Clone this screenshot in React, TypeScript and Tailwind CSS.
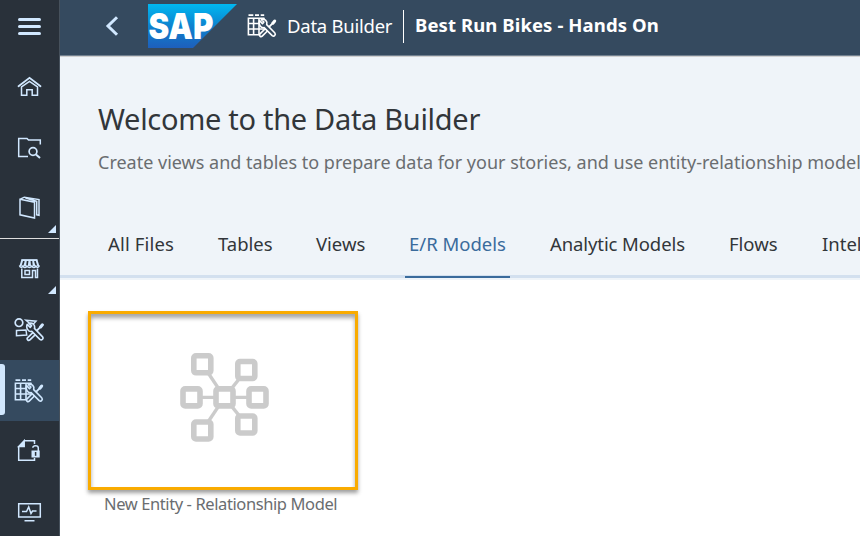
import type { ReactNode } from 'react';

const ICE = '#d1e8ff';

function Tools({ color, bg }: { color: string; bg: string }) {
  return (
    <g strokeLinecap="round" strokeLinejoin="round" fill="none">
      <path d="M16 2.2L9.5 8.8" stroke={color} strokeWidth="1.8" />
      <path d="M14.6 3.8L16.4 1.6" stroke={color} strokeWidth="3" />
      <path d="M8 10.5L2.8 15.6" stroke={color} strokeWidth="4.8" />
      <path d="M8 10.5L2.8 15.6" stroke={bg} strokeWidth="1.5" />
      <path
        d="M1.2 1.2L4.2 4.2L5.6 2.6L3 .2C6.5-1 9.5 2 8.4 5.2L16.4 13.4C18 15.2 15.8 17.8 13.9 16.2L5.8 8.2C2.6 9 -.4 5 1.2 1.2Z"
        stroke={color}
        strokeWidth="1.6"
        fill={bg}
      />
    </g>
  );
}

function GridTools({ color, bg }: { color: string; bg: string }) {
  return (
    <svg className="h-[24px] w-[30px] shrink-0" viewBox="0 0 30 24" fill="none">
      <path d="M1.5 1.2H6.3M8 1.2H12M13.7 1.2H17.2" stroke={color} strokeWidth="1.8" />
      <path d="M1 4.2H17.5M1 9.5H17M1 15H17M1 20.7H14M1.4 3.4V21.4M6.6 4V21M12 4V21M17 4V8" stroke={color} strokeWidth="1.6" />
      <g transform="translate(11.3 5.4)">
        <Tools color={color} bg={bg} />
      </g>
    </svg>
  );
}

function NavItem({ children, tall, active, more }: { children: ReactNode; tall?: boolean; active?: boolean; more?: boolean }) {
  return (
    <button
      className={`relative flex w-full shrink-0 items-center pl-[14px] ${tall ? 'h-[61px]' : 'h-[60px]'} ${active ? 'bg-[#354a5f]' : ''}`}
    >
      {active && <span className="absolute left-0 top-1 h-[51px] w-[5px] rounded-r-[3px] bg-[#d1e8ff]" />}
      {children}
      {more && (
        <svg className="absolute bottom-[5px] right-[3px] h-2 w-2" viewBox="0 0 8 8">
          <path d="M8 0V8H0Z" fill={ICE} />
        </svg>
      )}
    </button>
  );
}

function Glyph({ children }: { children: ReactNode }) {
  return (
    <svg className="h-6 w-[30px]" viewBox="0 0 30 24" fill="none" stroke={ICE} strokeWidth="1.5">
      {children}
    </svg>
  );
}

function Sidebar() {
  return (
    <nav className="flex h-full w-[60px] shrink-0 flex-col overflow-hidden border-r border-[#46515c] bg-[#29313a]">
      <button className="flex h-[57px] shrink-0 flex-col gap-1 pl-[18px] pt-[18px]">
        <span className="h-[3px] w-[23px] rounded-full bg-[#d1e8ff]" />
        <span className="h-[3px] w-[23px] rounded-full bg-[#d1e8ff]" />
        <span className="h-[3px] w-[23px] rounded-full bg-[#d1e8ff]" />
      </button>
      <NavItem>
        <Glyph>
          <path d="M4.5 11.3L15.5 2.8L26.5 11.3" strokeWidth="1.8" strokeLinecap="round" />
          <path d="M7.5 12V20.3H12.8V14.7H18.2V20.3H23.5V12L15.5 6.3Z" />
        </Glyph>
      </NavItem>
      <NavItem tall>
        <Glyph>
          <path d="M14 20.5H4.7V2.5H13L14.5 4H26.3V8.5" />
          <circle cx="19" cy="15.5" r="3.9" strokeWidth="1.7" />
          <path d="M22 18.5L26 22" strokeWidth="2" />
        </Glyph>
      </NavItem>
      <div className="relative border-b border-[#dedede]">
        <NavItem more>
          <Glyph>
            <path d="M6 3.3L20.5 6.2V22L6 18.8ZM6.3 3.2L10.3 1.2L25 3.6V19.3L22.5 18.8M11.5 2L22.7 5.2V19.5" />
          </Glyph>
        </NavItem>
      </div>
      <NavItem more>
        <Glyph>
          <path d="M7.4 2.5H23.4L25.4 9.2H5.4Z" fill={ICE} stroke="none" />
          <path d="M9.9 4L8.4 9M13.6 4L12.9 9M17.4 4L17.9 9M20.9 4L22.4 9" stroke="#29313a" strokeWidth="1.7" />
          <path d="M7.4 3H23.4M5.4 8.5Q6.9 12 8.9 9Q10.9 12 12.9 9Q15.4 12 17.9 9Q19.9 12 21.9 9Q23.9 12 25.4 8.5" />
          <path d="M7.8 11.5V20.5H18.5V13.5H21.5V20.5H23.5V11.5M11 13.5H15.5V17.5H11Z" />
        </Glyph>
      </NavItem>
      <NavItem tall>
        <Glyph>
          <circle cx="5" cy="4.7" r="3.8" strokeWidth="1.7" />
          <path d="M2.5 12.5L12 12L12.7 17L2.5 17.8ZM12 2.3L22 3.2L18 7.5Z" />
          <g transform="translate(12 5.2)">
            <Tools color={ICE} bg="#29313a" />
          </g>
        </Glyph>
      </NavItem>
      <NavItem tall active>
        <GridTools color={ICE} bg="#354a5f" />
      </NavItem>
      <NavItem>
        <Glyph>
          <path d="M4.7 7.5L10.2 1.7V7.5Z" fill={ICE} />
          <path d="M10 1.7H20.5V5M4.7 7V21.3H20.5V19" />
          <rect x="17.5" y="11.5" width="8.2" height="7" fill={ICE} stroke="none" />
          <path d="M18.8 8.8Q19 6.8 21.5 6.8Q24.3 6.8 24.3 9V12" />
          <path d="M21.6 13V16.8" stroke="#29313a" />
        </Glyph>
      </NavItem>
      <NavItem tall>
        <Glyph>
          <path d="M4.7 3.7H26.3V17H4.7ZM10.5 20.7H20.5M8 11.5H12.5L14.7 7L17 13.5L18.5 11H22.5" />
        </Glyph>
      </NavItem>
    </nav>
  );
}

function SapLogo() {
  return (
    <svg className="ml-[29px] mt-1 h-11 w-[89px] shrink-0 self-start" viewBox="0 0 89 44">
      <defs>
        <linearGradient id="sap" x1="0" y1="0" x2="0" y2="1">
          <stop offset="0" stopColor="#00b8f1" />
          <stop offset=".5" stopColor="#0d83cf" />
          <stop offset="1" stopColor="#1e5fbb" />
        </linearGradient>
      </defs>
      <path d="M0 0H89L45 44H0Z" fill="url(#sap)" />
      <text
        x="0.5" y="34.8" textLength="65" lengthAdjust="spacingAndGlyphs"
        fill="white"
        className="font-['Inter',sans-serif] text-[36px] font-black"
      >SAP</text>
    </svg>
  );
}

function Header() {
  return (
    <header className="flex h-[57px] shrink-0 items-center border-b border-[#cfcfcf] bg-[#354a5f] pb-1 text-white shadow-[inset_0_-1px_0_#71808f]">
      <svg className="ml-[45px] h-5 w-[14px] shrink-0" viewBox="0 0 14 20" fill="none">
        <path d="M12 1.2L3 10L12 18.8" stroke={ICE} strokeWidth="3" />
      </svg>
      <SapLogo />
      <div className="ml-[10px] flex"><GridTools color="#ffffff" bg="#354a5f" /></div>
      <span className="-mt-px ml-[10px] w-[106px] whitespace-nowrap text-[18.5px] leading-6 tracking-[-0.25px]">Data Builder</span>
      <span className="ml-[10px] h-[33px] w-px shrink-0 bg-white" />
      <span className="-mt-[2px] ml-[11px] whitespace-nowrap text-[18.5px] font-bold leading-6 tracking-[0.1px]">Best Run Bikes - Hands On</span>
    </header>
  );
}

const tabs = [
  { label: 'All Files', box: 'w-[66px]', track: 'tracking-[0.15px]' },
  { label: 'Tables', box: 'w-[54px]', track: '' },
  { label: 'Views', box: 'w-[49px]', track: '' },
  { label: 'E/R Models', box: 'w-[97px]', track: '', active: true },
  { label: 'Analytic Models', box: 'w-[135px]', track: 'tracking-[-0.1px]' },
  { label: 'Flows', box: 'w-[49px]', track: '' },
  { label: 'Intelligent Lookups', box: 'w-[160px]', track: '' },
];

const nodes = [
  [114.3, 53.3], [158.3, 59], [103.5, 86.4], [136.5, 86.4], [169.5, 86.4], [114.3, 119.5], [158.3, 113.5],
];

function Welcome() {
  return (
    <section className="h-[223px] shrink-0 overflow-hidden border-b-2 border-[#eff4f9] bg-[#eff4f9] text-[#32363a]">
      <h1 className="ml-[38px] mt-[41px] whitespace-nowrap text-[29px] leading-[42px] tracking-[-0.3px]">Welcome to the Data Builder</h1>
      <p className="ml-[38px] mt-[10px] whitespace-nowrap text-[18px] leading-6 text-[#6a6d70]">
        Create views and tables to prepare data for your stories, and use entity-relationship models
      </p>
      <div className="mt-[56px] flex h-[48px] gap-[44px] border-b-[3px] border-[#d3e0ef] pl-[48px]">
        {tabs.map((t) => (
          <button key={t.label} className={`relative flex shrink-0 items-start text-left text-[18.5px] leading-7 ${t.box} ${t.track} ${t.active ? 'text-[#3a6b9c]' : ''}`}>
            <span className="whitespace-nowrap">{t.label}</span>
            {t.active && <span className="absolute -bottom-[3px] -left-1 h-[2px] w-[105px] bg-[#3a6b9c]" />}
          </button>
        ))}
      </div>
    </section>
  );
}

function ModelCard() {
  return (
    <div className="ml-[28px] mt-[31px] w-[270px]">
      <div className="h-[179px] w-[270px] border-[3px] border-[#f9ab00] bg-white shadow-[0_3px_4px_rgba(0,0,0,0.38),inset_0_4px_4px_rgba(0,0,0,0.35)]">
        <svg className="-ml-[3px] -mt-[3px] h-[179px] w-[270px]" viewBox="0 0 270 179" fill="none" stroke="#cbcbcb">
          {nodes.map(([x, y]) => <path key={`l${x}-${y}`} d={`M136.5 86.4L${x} ${y}`} strokeWidth="3.4" />)}
          {nodes.map(([x, y]) => <rect key={`${x}-${y}`} x={x - 8.5} y={y - 8.5} width="17" height="17" rx="2.2" fill="white" strokeWidth="5.6" />)}
        </svg>
      </div>
      <div className="ml-4 mt-[2px] whitespace-nowrap text-[16.5px] leading-6 tracking-[-0.4px] text-[#6a6d70]">New Entity - Relationship Model</div>
    </div>
  );
}

export default function App() {
  return (
    <div className="flex h-[536px] w-[860px] overflow-hidden bg-white font-['Noto_Sans',sans-serif]">
      <Sidebar />
      <main className="flex min-w-0 flex-1 flex-col overflow-hidden">
        <Header />
        <Welcome />
        <ModelCard />
      </main>
    </div>
  );
}
